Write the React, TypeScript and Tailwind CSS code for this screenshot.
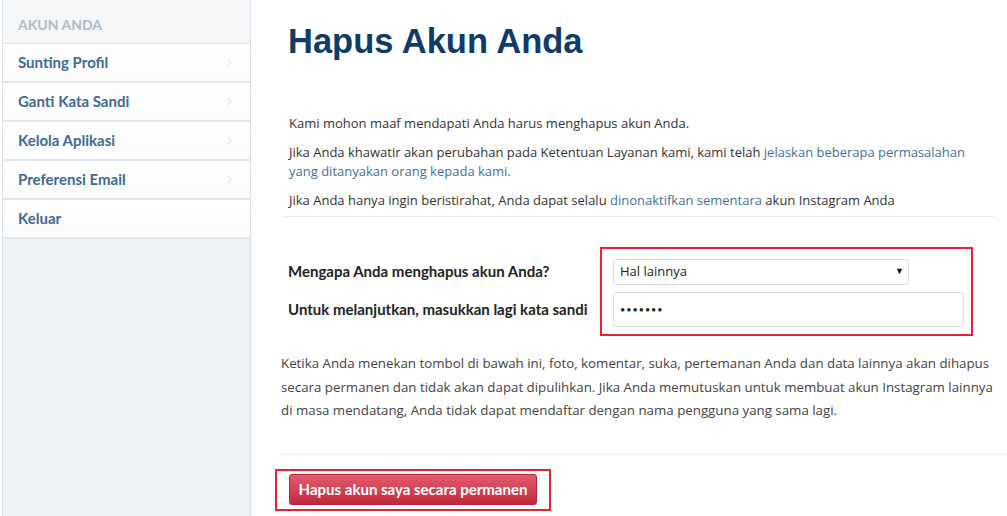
import React from 'react';
import { ChevronRight } from 'lucide-react';

const menu = [
  { label: 'Sunting Profil', arrow: true },
  { label: 'Ganti Kata Sandi', arrow: true },
  { label: 'Kelola Aplikasi', arrow: true },
  { label: 'Preferensi Email', arrow: true },
  { label: 'Keluar', arrow: false },
];

export default function App() {
  return (
    <div className="flex min-h-[516px] w-[1007px] bg-white font-['Lato',sans-serif] text-[#333]">
      {/* Sidebar */}
      <aside className="ml-[2px] flex w-[249px] shrink-0 flex-col border-x border-[#dde2e8] bg-[#edf1f5]">
        <div className="flex h-[44px] items-center border-b border-[#dde2e8] bg-[#f5f6f8] pl-[15px] pt-[5px] text-[14px] font-bold text-[#aebbca]">
          AKUN ANDA
        </div>
        {menu.map((item) => (
          <div
            key={item.label}
            className="flex h-[39px] items-center justify-between border-b-2 border-[#e3e7ec] bg-gradient-to-b from-white to-[#fafbfc] pl-[15px] pr-[14px] text-[15px] font-bold text-[#3e6a95]"
          >
            <span>{item.label}</span>
            {item.arrow && <ChevronRight size={13} strokeWidth={1.5} className="text-[#cfd4da]" />}
          </div>
        ))}
      </aside>

      {/* Main */}
      <main className="flex-1 pl-[30px]">
        <h1 className="ml-[7px] mt-[22px] font-['Liberation_Sans',Arial,sans-serif] text-[34.5px] font-bold leading-[38px] text-[#0f3b68]">
          Hapus Akun Anda
        </h1>

        <div className="ml-[8px] mt-[54px] space-y-[10px] font-['Open_Sans',sans-serif] text-[13px] leading-[19px]">
          <p>Kami mohon maaf mendapati Anda harus menghapus akun Anda.</p>
          <p className="whitespace-nowrap">
            Jika Anda khawatir akan perubahan pada Ketentuan Layanan kami, kami telah{' '}
            <a className="text-[#3f729b]">jelaskan beberapa permasalahan</a>
            <br />
            <a className="text-[#3f729b]">yang ditanyakan orang kepada kami.</a>
          </p>
          <p>
            Jika Anda hanya ingin beristirahat, Anda dapat selalu{' '}
            <a className="text-[#3f729b]">dinonaktifkan sementara</a> akun Instagram Anda
          </p>
        </div>

        <div className="ml-[1px] mt-[6px] h-px w-[712px] bg-[#ececec]" />

        {/* Form */}
        <div className="mt-[30px] flex">
          <div className="ml-[7px] flex w-[312px] flex-col gap-[8px] pt-[11px] text-[15px] font-bold text-[#222]">
            <div className="flex h-[26px] items-center">Mengapa Anda menghapus akun Anda?</div>
            <div className="flex h-[35px] items-center">Untuk melanjutkan, masukkan lagi kata sandi</div>
          </div>
          <div className="flex w-[373px] flex-col gap-[8px] border-2 border-[#e8222e] pb-[7px] pl-[11px] pr-[7px] pt-[9px]">
            <div className="relative h-[26px] w-[296px]">
              <select
                defaultValue="other"
                className="h-full w-full appearance-none rounded-[3px] border border-[#dcdcdc] bg-white pl-[6px] font-['Open_Sans',sans-serif] text-[13px] text-[#222] outline-none"
              >
                <option value="other">Hal lainnya</option>
              </select>
              <span className="pointer-events-none absolute right-[5px] top-[6px] text-[9px] text-[#111]">▼</span>
            </div>
            <input
              type="password"
              defaultValue="1234567"
              className="h-[35px] w-[351px] rounded-[3px] border border-[#dcdcdc] bg-white pl-[6px] text-[9px] tracking-[1px] text-[#222] outline-none"
            />
          </div>
        </div>

        <p className="mt-[16px] w-[712px] whitespace-nowrap font-['Open_Sans',sans-serif] text-[13.3px] leading-[23.5px] text-[#444]">
          Ketika Anda menekan tombol di bawah ini, foto, komentar, suka, pertemanan Anda dan data lainnya akan dihapus
          <br />
          secara permanen dan tidak akan dapat dipulihkan. Jika Anda memutuskan untuk membuat akun Instagram lainnya
          <br />
          di masa mendatang, Anda tidak dapat mendaftar dengan nama pengguna yang sama lagi.
        </p>

        <div className="-ml-[1px] mt-[31px] h-px bg-[#ececec]" />

        <div className="-ml-[6px] mt-[14px] inline-flex border-2 border-[#e8222e] pb-[4px] pl-[12px] pr-[12px] pt-[3px]">
          <button className="h-[31px] w-[248px] rounded-[3px] border border-[#b5263b] bg-gradient-to-b from-[#e55a6d] to-[#c0283f] text-[15px] font-bold text-white">
            Hapus akun saya secara permanen
          </button>
        </div>
      </main>
    </div>
  );
}
